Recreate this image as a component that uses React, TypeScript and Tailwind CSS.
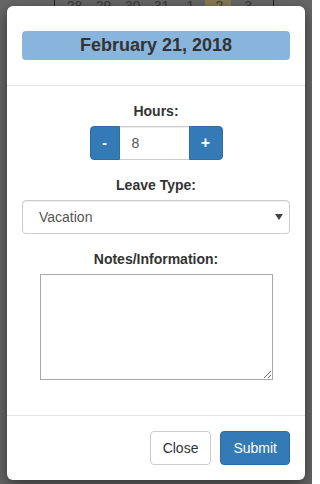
import React from "react";

export default function App() {
  const days = ["28", "29", "30", "31", "1", "2", "3"];
  return (
    <div
      className="relative w-[312px] h-[484px] overflow-hidden bg-[#676767]"
      style={{ fontFamily: '"Liberation Sans", Arial, sans-serif' }}
    >
      {/* calendar behind the backdrop */}
      <div className="absolute left-[54px] top-0 w-[220px] h-[8px] border-x border-[#1e1e1e]">
        <div className="absolute left-[150px] top-0 w-[26px] h-[8px] bg-[#8b7b55]" />
        <div className="absolute left-0 top-[-4px] w-[220px] flex text-[14px] leading-[20px] text-[#3a3a3a]">
          {days.map((d, i) => (
            <div key={i} className="w-[29px] text-center first:ml-[5px]">
              {d}
            </div>
          ))}
        </div>
      </div>

      {/* modal */}
      <div className="absolute left-[7px] top-[6px] w-[298px] h-[474px] bg-white rounded-[6px] shadow-[0_5px_15px_rgba(0,0,0,0.5)] flex flex-col">
        <div className="px-[15px] pt-[25px] pb-[25px] border-b border-[#e5e5e5]">
          <div className="h-[29px] rounded-[4px] bg-[#89b5dc] flex items-center justify-center text-[18px] font-bold text-[#333]">
            February 21, 2018
          </div>
        </div>

        <div className="px-[15px] pt-[15px] h-[330px] border-b border-[#e5e5e5] flex flex-col items-center text-[#333]">
          <div className="text-[14px] leading-[20px] font-bold">Hours:</div>
          <div className="mt-[5px] flex h-[34px]">
            <button className="w-[30px] h-[34px] bg-[#337ab7] border border-[#2e6da4] rounded-l-[4px] text-white font-bold text-[14px]">
              -
            </button>
            <div className="w-[69px] h-[34px] border-y border-[#ccc] shadow-[inset_0_1px_1px_rgba(0,0,0,0.075)] flex items-center pl-[12px] text-[14px] text-[#555]">
              8
            </div>
            <button className="w-[34px] h-[34px] bg-[#337ab7] border border-[#2e6da4] rounded-r-[4px] text-white font-bold text-[16px]">
              +
            </button>
          </div>

          <div className="mt-[15px] text-[14px] leading-[20px] font-bold">Leave Type:</div>
          <div className="mt-[5px] w-full h-[34px] border border-[#ccc] rounded-[4px] shadow-[inset_0_1px_1px_rgba(0,0,0,0.075)] flex items-center justify-between pl-[16px] pr-[6px] text-[14px] text-[#555]">
            <span>Vacation</span>
            <svg width="8" height="6" viewBox="0 0 8 6">
              <path d="M0 0 H8 L4 6 Z" fill="#444" />
            </svg>
          </div>

          <div className="mt-[15px] text-[14px] leading-[20px] font-bold">Notes/Information:</div>
          <textarea className="mt-[5px] w-[233px] h-[106px] border border-[#a9a9a9] outline-none block" />
        </div>

        <div className="flex justify-end gap-[9px] px-[15px] pt-[15px]">
          <button className="h-[34px] px-[12px] border border-[#ccc] rounded-[4px] bg-white text-[14px] text-[#333]">
            Close
          </button>
          <button className="h-[34px] px-[12px] border border-[#2e6da4] rounded-[4px] bg-[#337ab7] text-[14px] text-white">
            Submit
          </button>
        </div>
      </div>
    </div>
  );
}
